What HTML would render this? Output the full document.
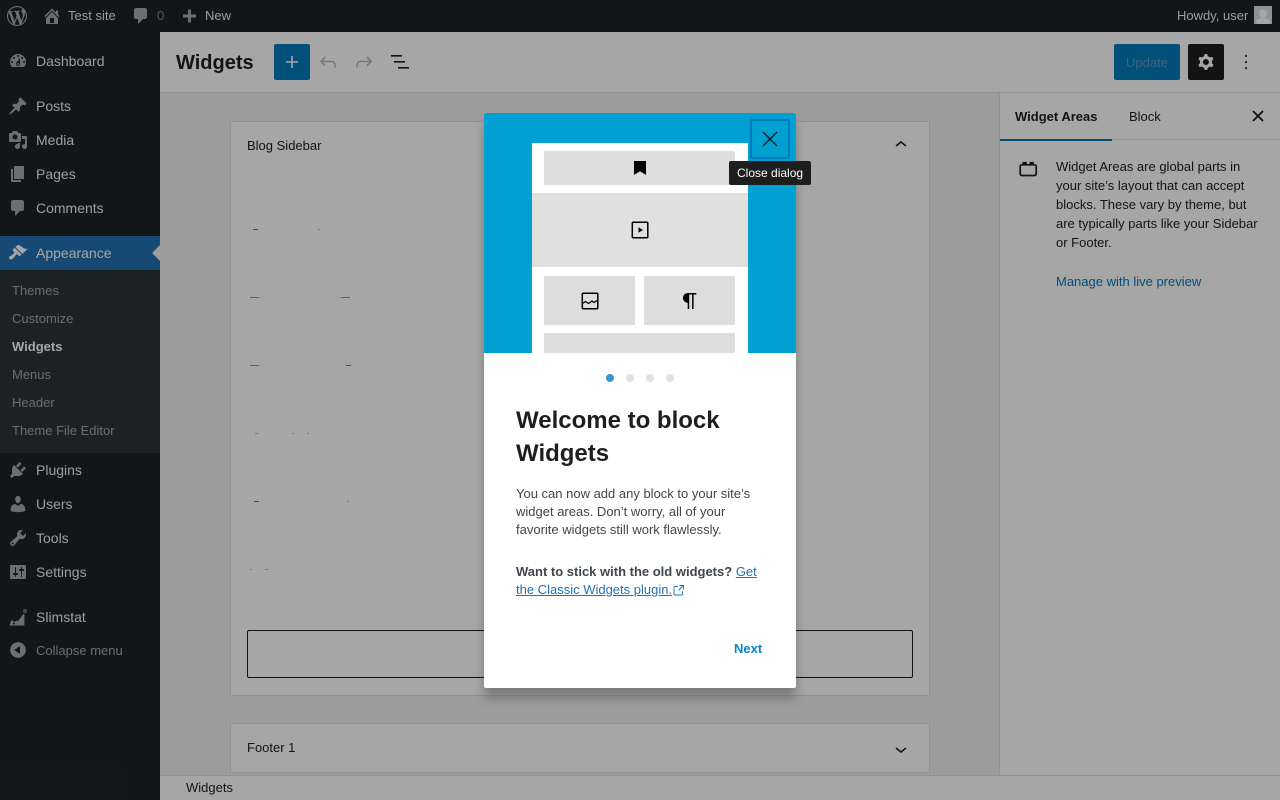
<!DOCTYPE html>
<html lang="en"><head><meta charset="utf-8"><title>Widgets</title>
<style>
html,body{margin:0;padding:0;width:1280px;height:800px;overflow:hidden;background:#f0f0f0;font-family:"Liberation Sans",sans-serif;}
.a{position:absolute;}
.t{position:absolute;white-space:nowrap;}
svg{position:absolute;display:block;}
.m{position:absolute;left:36px;font-size:14px;line-height:18px;color:#f0f0f1;white-space:nowrap;}
.s{position:absolute;left:12px;font-size:13px;line-height:18px;color:#c3c4c7cc;white-space:nowrap;}
.d{position:absolute;height:1px;background:#555;}
.i{fill:#a7aaad;}
.p{position:absolute;left:516px;width:250px;font-size:13px;line-height:18px;color:#40464d;margin:0;}
</style></head><body>
<!-- editor -->
<div class="a" style="left:160px;top:32px;width:1120px;height:60px;background:#fff;border-bottom:1px solid #e0e0e0;"></div>
<div class="t" style="left:176px;top:51px;font-size:20px;line-height:24px;font-weight:700;color:#1e1e1e;">Widgets</div>
<div class="a" style="left:274px;top:44px;width:36px;height:36px;background:#007cba;border-radius:2px;"></div>
<svg style="left:280px;top:50px" width="24" height="24" viewBox="0 0 24 24" fill="#fff"><path d="M18 11.2h-5.2V6h-1.6v5.2H6v1.6h5.2V18h1.6v-5.2H18z"/></svg>
<svg style="left:316px;top:50px" width="24" height="24" viewBox="0 0 24 24" fill="#b4b4b4"><path d="M18.3 11.7c-.6-.6-1.4-.9-2.3-.9H6.7l2.9-3.3-1.1-1-4.5 5L8.5 16l1-1-2.7-2.7H16c.5 0 .9.2 1.3.5 1 1 1 3.4 1 4.5v.3h1.5v-.2c0-1.5 0-4.3-1.5-5.7z"/></svg>
<svg style="left:352px;top:50px" width="24" height="24" viewBox="0 0 24 24" fill="#b4b4b4"><path d="M15.6 6.5l-1.1 1 2.9 3.3H8c-.9 0-1.7.3-2.3.9-1.4 1.5-1.4 4.2-1.4 5.6v.2h1.5v-.3c0-1.1 0-3.5 1-4.5.3-.3.7-.5 1.3-.5h9.2L14.5 15l1.1 1.1 4.6-4.6-4.6-5z"/></svg>
<svg style="left:388px;top:50px" width="24" height="24" viewBox="0 0 24 24" fill="#1e1e1e"><rect x="3" y="5" width="11" height="1.6"/><rect x="6" y="11" width="11" height="1.6"/><rect x="10" y="17" width="11" height="1.6"/></svg>
<div class="a" style="left:1114px;top:44px;width:66px;height:36px;background:#007cba;border-radius:2px;"></div>
<div class="t" style="left:1126px;top:55px;font-size:13px;line-height:16px;color:#5b9dc4;">Update</div>
<div class="a" style="left:1188px;top:44px;width:36px;height:36px;background:#1e1e1e;border-radius:2px;"></div>
<svg style="left:1194px;top:50px" width="24" height="24" viewBox="0 0 24 24" fill="#fff"><path fill-rule="evenodd" d="M10.289 4.836A1 1 0 0111.275 4h1.306a1 1 0 01.987.836l.244 1.466c.787.26 1.503.679 2.108 1.218l1.393-.522a1 1 0 011.216.437l.653 1.13a1 1 0 01-.23 1.273l-1.148.944a6.025 6.025 0 010 2.435l1.149.946a1 1 0 01.23 1.272l-.653 1.13a1 1 0 01-1.216.437l-1.394-.522c-.605.54-1.32.958-2.108 1.218l-.244 1.466a1 1 0 01-.987.836h-1.306a1 1 0 01-.986-.836l-.244-1.466a5.995 5.995 0 01-2.108-1.218l-1.394.522a1 1 0 01-1.217-.436l-.653-1.131a1 1 0 01.23-1.272l1.149-.946a6.026 6.026 0 010-2.435l-1.148-.944a1 1 0 01-.23-1.272l.653-1.131a1 1 0 011.217-.437l1.393.522a5.994 5.994 0 012.108-1.218l.244-1.466zM14.929 12a3 3 0 11-6 0 3 3 0 016 0z"/></svg>
<svg style="left:1234px;top:50px" width="24" height="24" viewBox="0 0 24 24" fill="#1e1e1e"><rect x="11.2" y="4.8" width="1.6" height="2.2"/><rect x="11.2" y="10.9" width="1.6" height="2.2"/><rect x="11.2" y="17" width="1.6" height="2.2"/></svg>

<!-- canvas -->
<div class="a" style="left:160px;top:93px;width:839px;height:682px;background:#f0f0f0;"></div>
<div class="a" style="left:230px;top:121px;width:698px;height:573px;background:#fff;border:1px solid #e0e0e0;"></div>
<div class="t" style="left:247px;top:138px;font-size:13px;line-height:16px;color:#1e1e1e;">Blog Sidebar</div>
<svg style="left:889px;top:133px" width="24" height="24" viewBox="0 0 24 24" fill="#1e1e1e"><path d="M6.5 12.4L12 8l5.5 4.4-.9 1.2L12 10l-4.5 3.6-1-1.2z"/></svg>
<div class="d" style="left:253px;top:229px;width:5px;background:#777;"></div><div class="d" style="left:318px;top:229px;width:2px;background:#bbb;"></div>
<div class="d" style="left:250px;top:297px;width:9px;background:#999;"></div><div class="d" style="left:341px;top:297px;width:9px;background:#999;"></div>
<div class="d" style="left:250px;top:365px;width:9px;background:#999;"></div><div class="d" style="left:346px;top:365px;width:5px;background:#777;"></div>
<div class="d" style="left:255px;top:433px;width:3px;background:#bbb;"></div><div class="d" style="left:292px;top:433px;width:2px;background:#bbb;"></div><div class="d" style="left:307px;top:433px;width:2px;background:#bbb;"></div>
<div class="d" style="left:254px;top:501px;width:5px;background:#777;"></div><div class="d" style="left:347px;top:501px;width:2px;background:#bbb;"></div>
<div class="d" style="left:250px;top:569px;width:2px;background:#bbb;"></div><div class="d" style="left:265px;top:569px;width:3px;background:#bbb;"></div>
<div class="a" style="left:247px;top:630px;width:664px;height:46px;border:1px solid #1e1e1e;border-radius:2px;"></div>
<div class="a" style="left:230px;top:723px;width:698px;height:48px;background:#fff;border:1px solid #e0e0e0;"></div>
<div class="t" style="left:247px;top:740px;font-size:13px;line-height:16px;color:#1e1e1e;">Footer 1</div>
<svg style="left:889px;top:737px" width="24" height="24" viewBox="0 0 24 24" fill="#1e1e1e"><path d="M17.5 11.6L12 16l-5.500-4.400.900-1.200L12 14l4.500-3.600 1 1.200z"/></svg>

<!-- right sidebar -->
<div class="a" style="left:999px;top:93px;width:280px;height:682px;background:#fff;border-left:1px solid #e0e0e0;"></div>
<div class="a" style="left:1000px;top:139px;width:280px;height:1px;background:#e0e0e0;"></div>
<div class="a" style="left:1000px;top:139px;width:112px;height:2px;background:#007cba;"></div>
<div class="t" style="left:1015px;top:109px;font-size:13px;line-height:16px;font-weight:700;color:#1e1e1e;">Widget Areas</div>
<div class="t" style="left:1129px;top:109px;font-size:13px;line-height:16px;color:#1e1e1e;">Block</div>
<svg style="left:1252px;top:110px" width="12" height="12" viewBox="0 0 12 12" fill="none" stroke="#1e1e1e" stroke-width="1.900"><path d="M1 1l10 10M11 1L1 11"/></svg>
<svg style="left:1018px;top:160px" width="20" height="18" viewBox="0 0 20 18" fill="none" stroke="#1e1e1e" stroke-width="1.700"><rect x="2.200" y="4.800" width="16" height="10.700" rx="1.500"/><path d="M4.500 3h4.300M11.500 3h4.300" stroke-width="2.200"/></svg>
<div class="a" style="left:1056px;top:157px;width:210px;font-size:13px;line-height:19px;color:#1e1e1e;">Widget Areas are global parts in<br>your site’s layout that can accept<br>blocks. These vary by theme, but<br>are typically parts like your Sidebar<br>or Footer.</div>
<div class="t" style="left:1056px;top:272px;font-size:13px;line-height:19px;color:#007cba;">Manage with live preview</div>

<!-- footer -->
<div class="a" style="left:160px;top:775px;width:1120px;height:25px;background:#fff;border-top:1px solid #e0e0e0;box-sizing:border-box;"></div>
<div class="t" style="left:186px;top:780px;font-size:13px;line-height:16px;color:#1e1e1e;">Widgets</div>

<!-- admin sidebar -->
<div class="a" style="left:0;top:32px;width:160px;height:768px;background:#1d2327;"></div>
<div class="a" style="left:0;top:236px;width:160px;height:34px;background:#2271b1;"></div>
<div class="a" style="left:0;top:270px;width:160px;height:183px;background:#2c3338;"></div>
<div class="a" style="left:152px;top:245px;width:0;height:0;border-top:8px solid transparent;border-bottom:8px solid transparent;border-right:8px solid #f0f0f0;"></div>
<div class="m" style="top:52px;">Dashboard</div>
<div class="m" style="top:97px;">Posts</div>
<div class="m" style="top:131px;">Media</div>
<div class="m" style="top:165px;">Pages</div>
<div class="m" style="top:199px;">Comments</div>
<div class="m" style="top:244px;color:#fff;">Appearance</div>
<div class="s" style="top:282px;">Themes</div>
<div class="s" style="top:310px;">Customize</div>
<div class="s" style="top:338px;color:#fff;font-weight:700;">Widgets</div>
<div class="s" style="top:366px;">Menus</div>
<div class="s" style="top:394px;">Header</div>
<div class="s" style="top:422px;">Theme File Editor</div>
<div class="m" style="top:461px;">Plugins</div>
<div class="m" style="top:495px;">Users</div>
<div class="m" style="top:529px;">Tools</div>
<div class="m" style="top:563px;">Settings</div>
<div class="m" style="top:608px;">Slimstat</div>
<div class="m" style="top:642px;font-size:13px;color:#a7aaad;">Collapse menu</div>
<svg style="left:8px;top:51px" width="20" height="20" viewBox="0 0 20 20" class="i"><path d="M3.760 16h12.480c1.100-1.370 1.760-3.110 1.760-5 0-4.420-3.580-8-8-8s-8 3.580-8 8c0 1.890.660 3.630 1.760 5zM10 4c.550 0 1 .450 1 1s-.450 1-1 1-1-.450-1-1 .450-1 1-1zM6 6c.550 0 1 .450 1 1s-.450 1-1 1-1-.450-1-1 .450-1 1-1zm8 0c.550 0 1 .450 1 1s-.450 1-1 1-1-.450-1-1 .450-1 1-1zm-5.370 5.550L12 7v6c0 1.100-.900 2-2 2s-2-.900-2-2c0-.570.240-1.080.630-1.450zM4 10c.550 0 1 .450 1 1s-.450 1-1 1-1-.450-1-1 .450-1 1-1zm12 0c.550 0 1 .450 1 1s-.450 1-1 1-1-.450-1-1 .450-1 1-1zm-5 3c0-.550-.450-1-1-1s-1 .450-1 1 .450 1 1 1 1-.450 1-1z" fill-rule="evenodd"/></svg>
<svg style="left:8px;top:96px" width="20" height="20" viewBox="0 0 20 20" class="i"><path d="M10.440 3.020l1.820-1.820 6.360 6.350-1.830 1.820c-1.050-.680-2.480-.570-3.410.360l-.750.750c-.920.930-1.040 2.350-.350 3.410l-1.830 1.820-2.410-2.410-2.800 2.790c-.420.420-3.380 2.710-3.800 2.290s1.860-3.390 2.280-3.810l2.790-2.790L4.100 9.360l1.830-1.820c1.050.690 2.480.570 3.400-.360l.750-.750c.930-.920 1.050-2.350.360-3.410z"/></svg>
<svg style="left:8px;top:130px" width="20" height="20" viewBox="0 0 20 20" class="i"><path d="M13 11V4c0-.550-.450-1-1-1h-1.670L9 1H5L3.670 3H2c-.550 0-1 .450-1 1v7c0 .550.450 1 1 1h10c.550 0 1-.450 1-1zM7 4.500c1.380 0 2.500 1.120 2.500 2.500S8.380 9.500 7 9.500 4.500 8.380 4.500 7 5.620 4.500 7 4.500zM14 6h5v10.500c0 1.380-1.120 2.500-2.500 2.500S14 17.880 14 16.500s1.120-2.500 2.500-2.500c.170 0 .340.020.500.050V9h-3V6zm-4 8.050V13h2v3.500c0 1.380-1.120 2.500-2.500 2.500S7 17.880 7 16.500 8.120 14 9.500 14c.170 0 .340.020.500.050z" fill-rule="evenodd"/></svg>
<svg style="left:8px;top:164px" width="20" height="20" viewBox="0 0 20 20" class="i"><path d="M6 15V2h10v13H6zm-1 1h8v2H3V5h2v11z"/></svg>
<svg style="left:8px;top:198px" width="20" height="20" viewBox="0 0 20 20" class="i"><path d="M5 2h9c1.100 0 2 .900 2 2v7c0 1.100-.900 2-2 2h-2l-5 5v-5H5c-1.100 0-2-.900-2-2V4c0-1.100.900-2 2-2z"/></svg>
<svg style="left:8px;top:243px" width="20" height="20" viewBox="0 0 20 20" fill="#fff"><path d="M14.480 11.060L7.410 3.990l1.500-1.500c.500-.560 2.300-.470 3.510.320 1.210.800 1.430 1.280 2.910 2.100 1.180.640 2.450 1.260 4.450.850zm-.710.710L6.700 4.700 4.930 6.470c-.390.390-.390 1.020 0 1.410l1.060 1.060c.390.390.390 1.030 0 1.420-.600.600-1.430 1.110-2.210 1.690-.350.260-.700.530-1.010.840C1.430 13.230.390 14.840 1.560 16s2.780.120 4.110-1.210c.310-.310.580-.660.840-1.010.580-.780 1.090-1.610 1.690-2.210.390-.390 1.030-.390 1.420 0l1.060 1.060c.390.390 1.020.390 1.410 0z"/></svg>
<svg style="left:8px;top:460px" width="20" height="20" viewBox="0 0 20 20" class="i"><path d="M13.110 4.360L9.870 7.600 8 5.730l3.240-3.240c.350-.340 1.050-.200 1.560.320.520.510.660 1.210.310 1.550zm-8 1.770l.910-1.120 9.010 9.010-1.190.840c-.710.710-2.630 1.160-3.820 1.160H6.140L4.900 17.260c-.590.590-1.540.590-2.120 0-.590-.580-.590-1.530 0-2.120l1.240-1.240v-3.880c0-1.130.400-3.190 1.090-3.890zm7.260 3.970l3.240-3.240c.340-.350 1.040-.210 1.550.310.520.510.660 1.210.310 1.550l-3.240 3.250z"/></svg>
<svg style="left:8px;top:494px" width="20" height="20" viewBox="0 0 20 20" class="i"><path d="M10 9.250c-2.270 0-2.730-3.440-2.730-3.440C7 4.020 7.820 2 9.970 2c2.160 0 2.980 2.020 2.710 3.810 0 0-.410 3.440-2.680 3.440zm0 2.570L12.720 10c2.390 0 4.520 2.330 4.520 4.530v2.490s-3.650 1.130-7.240 1.130c-3.650 0-7.240-1.130-7.240-1.130v-2.490c0-2.250 1.940-4.480 4.470-4.480z"/></svg>
<svg style="left:8px;top:528px" width="20" height="20" viewBox="0 0 20 20" class="i"><path d="M16.680 9.770c-1.340 1.340-3.300 1.670-4.950.990l-5.410 6.520c-.990.990-2.590.990-3.580 0s-.990-2.590 0-3.570l6.520-5.420c-.680-1.650-.350-3.610.990-4.950 1.280-1.280 3.120-1.620 4.720-1.060l-2.890 2.890 2.820 2.820 2.860-2.870c.530 1.580.180 3.390-1.080 4.650zM3.810 16.210c.400.390 1.040.390 1.430 0 .400-.400.400-1.040 0-1.430-.390-.400-1.030-.400-1.430 0-.390.390-.390 1.030 0 1.430z"/></svg>
<svg style="left:8px;top:562px" width="20" height="20" viewBox="0 0 20 20" class="i"><path d="M18 16V4c0-.550-.450-1-1-1H3c-.550 0-1 .450-1 1v12c0 .550.450 1 1 1h14c.550 0 1-.450 1-1zM8 11h1c.550 0 1 .450 1 1s-.450 1-1 1H8v1.500c0 .280-.220.500-.500.500s-.500-.220-.500-.500V13H6c-.550 0-1-.450-1-1s.450-1 1-1h1V5.500c0-.280.220-.500.500-.500s.500.220.500.500V11zm5-2h-1c-.550 0-1-.450-1-1s.450-1 1-1h1V5.500c0-.280.220-.500.500-.500s.500.220.500.500V7h1c.550 0 1 .450 1 1s-.450 1-1 1h-1v5.500c0 .280-.220.500-.500.500s-.500-.220-.500-.500V9z" fill-rule="evenodd"/></svg>
<svg style="left:8px;top:607px" width="20" height="20" viewBox="0 0 20 20" class="i"><path fill-rule="evenodd" d="M1.500 18.500l2-5.500 3 2 2-1.500 1 1 6-7.500.9 0V18.500zM5 16.500a1 1 0 102 0 1 1 0 10-2 0z"/><circle cx="17" cy="4" r="1.300" fill="none" stroke="#a7aaad"/></svg>
<svg style="left:8px;top:640px" width="20" height="20" viewBox="0 0 20 20" class="i"><path d="M10 2.160c4.330 0 7.840 3.510 7.840 7.840s-3.510 7.840-7.840 7.840S2.160 14.330 2.160 10 5.710 2.160 10 2.160zm2 11.720V6.120L6.180 9.970z"/></svg>

<!-- admin bar -->
<div class="a" style="left:0;top:0;width:1280px;height:32px;background:#1d2327;"></div>
<svg style="left:7px;top:6px" width="20" height="20" viewBox="0 0 20 20" class="i"><path d="M20 10c0-5.510-4.490-10-10-10C4.480 0 0 4.490 0 10c0 5.520 4.480 10 10 10 5.510 0 10-4.480 10-10zM7.780 15.370L4.370 6.220c.550-.020 1.170-.080 1.170-.080.500-.060.440-1.130-.060-1.110 0 0-1.450.110-2.370.110-.180 0-.370 0-.580-.010C4.120 2.690 6.870 1.110 10 1.110c2.330 0 4.450.870 6.050 2.340-.680-.110-1.650.390-1.650 1.580 0 .740.450 1.360.900 2.100.350.610.550 1.360.550 2.460 0 1.490-1.400 5-1.400 5l-3.030-8.370c.540-.020.820-.170.820-.170.500-.050.440-1.250-.060-1.220 0 0-1.440.120-2.380.120-.870 0-2.330-.120-2.330-.120-.500-.030-.560 1.200-.060 1.220l.920.080 1.260 3.410zM17.410 10c.240-.640.740-1.870.430-4.250.700 1.290 1.050 2.710 1.050 4.250 0 3.290-1.730 6.240-4.400 7.780.970-2.590 1.940-5.200 2.920-7.780zM6.100 18.090C3.120 16.650 1.110 13.530 1.110 10c0-1.300.230-2.480.720-3.590C3.250 10.300 4.670 14.200 6.100 18.090zm4.030-6.630l2.580 6.980c-.860.290-1.760.450-2.710.450-.790 0-1.570-.110-2.290-.330.810-2.380 1.620-4.740 2.420-7.100z"/></svg>
<svg style="left:42px;top:6px" width="20" height="20" viewBox="0 0 20 20" class="i"><path d="M16 8.500l1.530 1.530-1.060 1.060L10 4.620l-6.470 6.470-1.060-1.060L10 2.500l4 4v-2h2v4zm-6-2.460l6 5.990V18H4v-5.970zM12 17v-5H8v5h4z" fill-rule="evenodd"/></svg>
<div class="t" style="left:68px;top:7px;font-size:13px;line-height:18px;color:#f0f0f1;">Test site</div>
<svg style="left:131px;top:6px" width="20" height="20" viewBox="0 0 20 20" class="i"><path d="M5 2h9c1.100 0 2 .900 2 2v7c0 1.100-.900 2-2 2h-2l-5 5v-5H5c-1.100 0-2-.900-2-2V4c0-1.100.900-2 2-2z"/></svg>
<div class="t" style="left:157px;top:7px;font-size:13px;line-height:18px;color:#a7aaad;opacity:.7;">0</div>
<svg style="left:179px;top:6px" width="20" height="20" viewBox="0 0 20 20" class="i"><path d="M17 7v3h-5v5H9v-5H4V7h5V2h3v5h5z" transform="translate(0 1.500)"/></svg>
<div class="t" style="left:205px;top:7px;font-size:13px;line-height:18px;color:#f0f0f1;">New</div>
<div class="t" style="left:1177px;top:7px;font-size:13px;line-height:18px;color:#f0f0f1;">Howdy, user</div>
<div class="a" style="left:1254px;top:6px;width:18px;height:18px;background:#ddd;overflow:hidden;"><div class="a" style="left:5px;top:3px;width:8px;height:9px;border-radius:50%;background:#fff;"></div><div class="a" style="left:2px;top:12px;width:14px;height:8px;border-radius:50%;background:#fff;"></div></div>

<!-- overlay -->
<div class="a" style="left:0;top:0;width:1280px;height:800px;background:rgba(0,0,0,.35);"></div>

<!-- modal -->
<div class="a" style="left:484px;top:113px;width:312px;height:575px;background:#fff;border-radius:2px;box-shadow:0 10px 10px rgba(0,0,0,.25);"></div>
<div class="a" style="left:484px;top:113px;width:312px;height:240px;background:#00a0d2;border-radius:2px 2px 0 0;"></div>
<div class="a" style="left:532px;top:143px;width:216px;height:210px;background:#fff;"></div>
<div class="a" style="left:544px;top:151px;width:191px;height:34px;background:#ddd;"></div>
<div class="a" style="left:532px;top:193px;width:216px;height:74px;background:#e0e0e0;"></div>
<div class="a" style="left:544px;top:276px;width:91px;height:49px;background:#ddd;"></div>
<div class="a" style="left:644px;top:276px;width:91px;height:49px;background:#ddd;"></div>
<div class="a" style="left:544px;top:333px;width:191px;height:20px;background:#ddd;"></div>
<svg style="left:634px;top:161px" width="12" height="14" viewBox="0 0 12 14" fill="#000"><path d="M0 0h12v14L6 10.200 0 14z"/></svg>
<svg style="left:631px;top:221px" width="18" height="18" viewBox="0 0 18 18" fill="none" stroke="#000" stroke-width="1.500"><rect x="1.300" y="1.300" width="15.500" height="15.500" rx="1"/><path d="M7.500 6.300v5.400L12 9z" fill="#000" stroke="none"/></svg>
<svg style="left:581px;top:292px" width="18" height="18" viewBox="0 0 18 18" fill="none" stroke="#000" stroke-width="1.500"><rect x="1.300" y="1.300" width="15.500" height="15.500" rx="1"/><path d="M1.500 11.500l3-2 3 2 3.500-2.500 2 1.500 3-2" stroke-width="1.200"/></svg>
<svg style="left:678px;top:289px" width="24" height="24" viewBox="0 0 24 24" fill="#000"><path d="M18.300 4H9.900v-.1l-.9.200c-2.300.4-4 2.400-4 4.800s1.700 4.400 4 4.800l.7.100V20h1.500V5.500h2.900V20h1.500V5.500h2.700V4z"/></svg>
<div class="a" style="left:750px;top:119px;width:36px;height:36px;border:2px solid #007cba;border-radius:2px;"></div>
<svg style="left:762px;top:131px" width="16" height="16" viewBox="0 0 16 16" fill="none" stroke="#1e1e1e" stroke-width="1.400"><path d="M1 1l14 14M15 1L1 15"/></svg>
<div class="a" style="left:729px;top:161px;width:82px;height:24px;background:#1e1e1e;border-radius:2px;"></div>
<div class="t" style="left:737px;top:165px;font-size:12px;line-height:16px;color:#fff;">Close dialog</div>
<div class="a" style="left:606px;top:374px;width:8px;height:8px;border-radius:50%;background:#3597cd;"></div>
<div class="a" style="left:626px;top:374px;width:8px;height:8px;border-radius:50%;background:#e0e0e0;"></div>
<div class="a" style="left:646px;top:374px;width:8px;height:8px;border-radius:50%;background:#e0e0e0;"></div>
<div class="a" style="left:666px;top:374px;width:8px;height:8px;border-radius:50%;background:#e0e0e0;"></div>
<div class="t" style="left:516px;top:404px;font-size:24px;line-height:33px;font-weight:700;color:#1e1e1e;">Welcome to block<br>Widgets</div>
<p class="p" style="top:485px;">You can now add any block to your site’s<br>widget areas. Don’t worry, all of your<br>favorite widgets still work flawlessly.</p>
<p class="p" style="top:563px;"><b>Want to stick with the old widgets?</b> <span style="color:#2271b1;text-decoration:underline;">Get<br>the Classic Widgets plugin.</span></p>
<svg style="left:673px;top:584px" width="12" height="12" viewBox="0 0 12 12" fill="none" stroke="#2271b1" stroke-width=".9"><path d="M5 2.500H2a1 1 0 00-1 1V10a1 1 0 001 1h6.500a1 1 0 001-1V7M6.500 1.500h4v4M10.300 1.700L5.500 6.500"/></svg>
<div class="t" style="left:734px;top:641px;font-size:13px;line-height:16px;font-weight:700;color:#0785c4;">Next</div>
</body></html>
